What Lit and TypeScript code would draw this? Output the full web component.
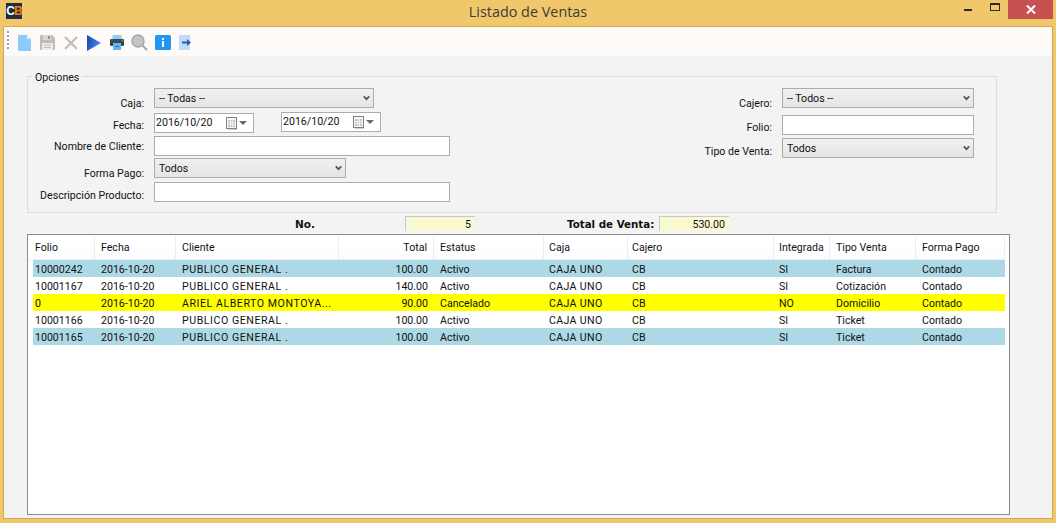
import { LitElement, html, css } from "lit";
import { customElement } from "lit/decorators.js";

const rows = [
  { c: "blue", v: ["10000242", "2016-10-20", "PUBLICO GENERAL .", "100.00", "Activo", "CAJA UNO", "CB", "SI", "Factura", "Contado"] },
  { c: "white", v: ["10001167", "2016-10-20", "PUBLICO GENERAL .", "140.00", "Activo", "CAJA UNO", "CB", "SI", "Cotización", "Contado"] },
  { c: "yellow", v: ["0", "2016-10-20", "ARIEL ALBERTO MONTOYA...", "90.00", "Cancelado", "CAJA UNO", "CB", "NO", "Domicilio", "Contado"] },
  { c: "white", v: ["10001166", "2016-10-20", "PUBLICO GENERAL .", "100.00", "Activo", "CAJA UNO", "CB", "SI", "Ticket", "Contado"] },
  { c: "blue", v: ["10001165", "2016-10-20", "PUBLICO GENERAL .", "100.00", "Activo", "CAJA UNO", "CB", "SI", "Ticket", "Contado"] },
];
const heads = ["Folio", "Fecha", "Cliente", "Total", "Estatus", "Caja", "Cajero", "Integrada", "Tipo Venta", "Forma Pago"];
const colClass = ["first", "", "", "r", "", "p5", "p4", "p5", "", ""];
const cellClass = ["", "", "caps", "", "", "caps2", "", "", "", ""];

const chevron = html`<svg class="chev" width="7" height="6" viewBox="0 0 9 7"><path d="M1 1.5 4.500 5 8 1.5" fill="none" stroke="#555" stroke-width="2.2"/></svg>`;
const select = (t: string, cls: string) => html`<div class="select ${cls}"><span>${t}</span>${chevron}</div>`;
const date = (cls: string) => html`<div class="date ${cls}"><span>2016/10/20</span>
  <svg width="21" height="13" viewBox="0 0 21 13"><rect x="0.500" y="0.500" width="10" height="11" fill="#f6f6f6" stroke="#85807c"/><rect x="2" y="3" width="7" height="7" fill="#bcc4ce"/><path d="M2 5.500h7M2 7.500h7M4.500 3v7M6.500 3v7" stroke="#eef1f4" stroke-width="1"/><path d="M11 12.500h-9" stroke="#cfcfcf"/><path d="M13 4h8l-4 4z" fill="#5d6b7e"/></svg></div>`;

const icons = html`
  <svg class="ic" width="13" height="16" viewBox="0 0 13 16"><path d="M0 0H9L13 4V16H0Z" fill="#90caf9"/><path d="M9 0 13 4H9Z" fill="#e3f2fd"/></svg>
  <svg class="ic m9" width="15" height="15" viewBox="0 0 15 15"><path d="M1 0H12L15 3V14a1 1 0 0 1-1 1H1a1 1 0 0 1-1-1V1a1 1 0 0 1 1-1Z" fill="#bdbdbd"/><rect x="3" y="0" width="8" height="5" fill="#d8d8d8"/><rect x="8" y="1" width="2" height="3" fill="#8f8f8f"/><rect x="2" y="8" width="11" height="7" fill="#ececec"/><path d="M4 10h7M4 12.500h7" stroke="#bdbdbd"/></svg>
  <svg class="ic m9" width="14" height="14" viewBox="0 0 14 14"><path d="M1 1 13 13M13 1 1 13" stroke="#bdbdbd" stroke-width="2" fill="none"/></svg>
  <svg class="ic m9" width="14" height="16" viewBox="0 0 14 16"><defs><linearGradient id="pl" x1="0" y1="0" x2="1" y2="0.300"><stop offset="0" stop-color="#1546a8"/><stop offset="1" stop-color="#3f8cf2"/></linearGradient></defs><path d="M0 0 14 8 0 16Z" fill="url(#pl)"/></svg>
  <svg class="ic m9" width="14" height="15" viewBox="0 0 14 15"><rect x="2.500" y="0" width="9" height="5" fill="#90caf9"/><rect x="0" y="4" width="14" height="7" rx="1" fill="#424a52"/><rect x="0" y="8" width="14" height="1" fill="#2d3338"/><rect x="3" y="8" width="8" height="7" fill="#64b5f6"/><rect x="5" y="11" width="4" height="1" fill="#1976d2"/><rect x="12" y="5" width="1" height="1" fill="#43c06a"/></svg>
  <svg class="ic m7" width="17" height="17" viewBox="0 0 17 17"><circle cx="7" cy="7" r="6" fill="#c4c4c4" stroke="#a8a8a8" stroke-width="1.500"/><path d="M11.500 11.500 16 16" stroke="#a8a8a8" stroke-width="2"/></svg>
  <svg class="ic m7" width="16" height="15" viewBox="0 0 16 15"><rect width="16" height="15" rx="1.500" fill="#2196f3"/><rect x="7" y="3" width="2" height="2" fill="#fff"/><rect x="7" y="6" width="2" height="6" fill="#fff"/></svg>
  <svg class="ic m8" width="12" height="15" viewBox="0 0 12 15"><rect width="11" height="15" fill="#bbdefb"/><path d="M3 6.500H8V4L12 7.500 8 11V8.500H3Z" fill="#3f51b5"/></svg>`;

@customElement("app-root")
export class AppRoot extends LitElement {
  static styles = css`
    :host { display: block; width: 1056px; height: 523px; background: #f0c76b; font-family: Roboto, sans-serif; font-size: 10.6px; color: #111; overflow: hidden; }
    .win { height: 523px; display: flex; flex-direction: column; }
    .title { height: 26px; flex: none; display: flex; position: relative; }
    .logo { width: 16px; height: 16px; margin: 3px 0 0 6px; background: #1c2f45; font: bold 12px/16px "Liberation Sans", sans-serif; letter-spacing: -1px; text-align: center; color: #fff; }
    .logo b { color: #f07d10; }
    .title-text { position: absolute; left: 0; right: 0; top: 3px; text-align: center; font: 14.4px/18px "Open Sans", sans-serif; color: #3c3c3c; }
    .ctrls { margin-left: auto; margin-right: 3px; display: flex; align-items: flex-start; }
    .min { width: 8px; height: 2px; background: #2b2b2b; margin: 9px 18px 0 0; }
    .max { width: 8px; height: 5px; border: 1px solid #2b2b2b; border-top-width: 2px; margin: 3px 8px 0 0; box-sizing: content-box; }
    .close { width: 45px; height: 19px; background: #c75050; display: flex; align-items: center; justify-content: center; }
    .body { flex: 1; margin: 0 3px 4px 3px; border: 1px solid #d0aa50; background: #f3f3f3; display: flex; flex-direction: column; min-height: 0; }
    .toolbar { height: 29px; box-sizing: border-box; flex: none; background: #fdfaf8; border-bottom-left-radius: 4px; border-bottom-right-radius: 4px; display: flex; align-items: center; padding: 2px 0 0 3px; }
    .grip { width: 2px; height: 18px; margin: -5px 9px 0 0; background: repeating-linear-gradient(#a0a0a0 0 2px, transparent 2px 4px); }
    .ic { flex: none; }
    .m9 { margin-left: 9px; }
    .m8 { margin-left: 8px; }
    .m7 { margin-left: 7px; }
    .group { width: 970px; height: 137px; margin: 20px 0 0 23px; border: 1px solid #dcdcdc; box-sizing: border-box; position: relative; display: flex; justify-content: space-between; padding: 11px 22px 0 0; }
    .legend { position: absolute; left: 4px; top: -6px; background: #f3f3f3; padding: 0 3px; line-height: 14px; }
    .col-l { display: grid; grid-template-rows: 24px 24px 22px 24px 20px; }
    .col-r { display: grid; grid-template-rows: 27px 23px 20px; }
    .row { display: flex; align-items: flex-start; }
    label { width: 116px; text-align: right; margin-right: 10px; line-height: 14px; flex: none; }
    .col-r label { width: 100px; }
    .o9 { padding-top: 9px; } .o7 { padding-top: 7px; } .o4 { padding-top: 4px; } .o6 { padding-top: 6px; }
    .select { height: 20px; box-sizing: border-box; border: 1px solid #acacac; background: linear-gradient(#f0f0f0, #e5e5e5); display: flex; align-items: center; justify-content: space-between; padding: 0 3px 0 4px; line-height: 14px; }
    .select span { padding-top: 1px; }
    .w220 { width: 220px; } .w192 { width: 192px; }
    .input { height: 20px; box-sizing: border-box; border: 1px solid #acacac; background: #fff; }
    .w296 { width: 296px; }
    .date { height: 20px; width: 100px; box-sizing: border-box; border: 1px solid #acacac; background: #fff; display: flex; align-items: center; justify-content: space-between; padding: 0 6px 0 1px; line-height: 14px; }
    .d1 { margin-top: 1px; }
    .d2 { margin-left: 27px; }
    .sum { height: 21px; flex: none; display: flex; align-items: center; font: bold 10.5px/14px "DejaVu Sans", sans-serif; white-space: nowrap; }
    .n1 { margin-left: 291px; width: 110px; }
    .n2 { width: 86px; margin-left: 92px; margin-right: 6px; font-size: 10.3px; }
    .box { height: 15px; width: 70px; box-sizing: border-box; background: #fafad2; border-top: 1px solid #c8c8c8; border-left: 1px solid #c8c8c8; padding-right: 4px; text-align: right; font: 10.6px/16px Roboto, sans-serif; }
    .table { flex: none; width: 983px; height: 281px; margin-left: 23px; box-sizing: border-box; border: 1px solid #8a8a96; background: #fff; padding: 1px 4px 0 5px; }
    .head, .tr { display: grid; grid-template-columns: 62px 81px 163px 95px 110px 84px 146px 56px 86px 89px; }
    .head { height: 23px; margin-left: -5px; padding-left: 5px; background: linear-gradient(#fff 50%, #fbfcfe); border-bottom: 1px solid #eef2f8; }
    .th { line-height: 24px; padding-left: 6px; border-right: 1px solid #e6eef8; box-sizing: border-box; white-space: nowrap; }
    .tr { height: 17px; }
    .td { line-height: 19px; height: 17px; padding-left: 6px; white-space: nowrap; }
    .tr .first, .head .first { padding-left: 2px; }
    .tr .p5, .head .p5 { padding-left: 5px; }
    .tr .p4, .head .p4 { padding-left: 4px; }
    .tr .r, .head .r { text-align: right; padding-left: 0; padding-right: 6px; }
    .caps { letter-spacing: 0.55px; }
    .caps2 { letter-spacing: 0.35px; }
    .blue { background: #add8e6; } .yellow { background: #ffff00; } .white { background: #fff; }
  `;
  render() {
    return html`<div class="win">
      <div class="title">
        <div class="logo">C<b>B</b></div>
        <div class="title-text">Listado de Ventas</div>
        <div class="ctrls"><div class="min"></div><div class="max"></div>
          <div class="close"><svg width="10" height="9" viewBox="0 0 10 9"><path d="M1 .5 9 8.500M9 .5 1 8.500" stroke="#fff" stroke-width="2" fill="none"/></svg></div></div>
      </div>
      <div class="body">
        <div class="toolbar"><div class="grip"></div>${icons}</div>
        <div class="group">
          <div class="legend">Opciones</div>
          <div class="col-l">
            <div class="row"><label class="o9">Caja:</label>${select("-- Todas --", "w220")}</div>
            <div class="row"><label class="o7">Fecha:</label>${date("d1")}${date("d2")}</div>
            <div class="row"><label class="o4">Nombre de Cliente:</label><div class="input w296"></div></div>
            <div class="row"><label class="o9">Forma Pago:</label>${select("Todos", "w192")}</div>
            <div class="row"><label class="o7">Descripción Producto:</label><div class="input w296"></div></div>
          </div>
          <div class="col-r">
            <div class="row"><label class="o9">Cajero:</label>${select("-- Todos --", "w192")}</div>
            <div class="row"><label class="o6">Folio:</label><div class="input w192"></div></div>
            <div class="row"><label class="o7">Tipo de Venta:</label>${select("Todos", "w192")}</div>
          </div>
        </div>
        <div class="sum">
          <span class="n1">No.</span><div class="box">5</div>
          <span class="n2">Total de Venta:</span><div class="box">530.00</div>
        </div>
        <div class="table">
          <div class="head">${heads.map((h, i) => html`<div class="th ${colClass[i]}">${h}</div>`)}</div>
          ${rows.map((r) => html`<div class="tr ${r.c}">${r.v.map((v, i) => html`<div class="td ${colClass[i]} ${cellClass[i]}">${v}</div>`)}</div>`)}
        </div>
      </div>
    </div>`;
  }
}
